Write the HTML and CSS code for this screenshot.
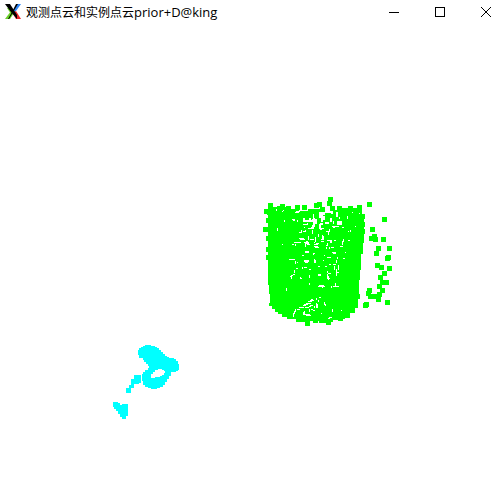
FILE: index.html
```html
<!DOCTYPE html>
<html lang="zh-CN">
<head>
<meta charset="utf-8">
<title>观测点云和实例点云prior+D@king</title>
<link rel="stylesheet" href="styles.css">
</head>
<body>
<header class="titlebar">
  <svg class="app-icon" viewBox="0 0 16 16" aria-hidden="true">
    <path fill="#2f86f5" d="M12 0h4l-5 7-2 1-1-2z"/>
    <path fill="#e8252b" d="M9 8l2-1 5 8h-5L8 10z"/>
    <path fill="#6cd02b" d="M0 15l6-8 3 2-4 6z"/>
    <path fill="#6cd02b" d="M2 4l3 0 3 5-2 1z"/>
    <path fill="#000" d="M0 0h5l7 11v4L6 8z"/>
    <path fill="#000" d="M11 0h2L4 15H3l4-7z"/>
  </svg>
  <h1 class="title">观测点云和实例点云<span class="latin">prior+D@king</span></h1>
  <div class="controls">
    <button type="button" class="control" aria-label="最小化"><svg viewBox="0 0 10 10"><path d="M0 5h10v1H0z"/></svg></button>
    <button type="button" class="control" aria-label="最大化"><svg viewBox="0 0 10 10"><path fill-rule="evenodd" d="M0 0h10v10H0zM1 1v8h8V1z"/></svg></button>
    <button type="button" class="control" aria-label="关闭"><svg viewBox="0 0 10 10"><path class="cross" d="M0 0l10 10M10 0L0 10"/></svg></button>
  </div>
</header>
<main class="viewer">
  <svg class="cloud" viewBox="0 26 501 460" role="img" aria-label="点云">
    <!-- mug body -->
    <path class="mug" d="M268 207H288V209H299V211H308V209H322V213H331V210H340V208H362V215H364V243H363V254H361V269H360V280H359V294H360V299H358V308H355V313H350V317H345V319H339V320H333V322H326V323H319V321H309V322H296V319H287V317H282V314H278V312H275V309H272V306H269V303H270V294H269V285H268Z"/>
    <!-- larger gaps near the rim -->
    <path class="opening" d="M305 211h5v5h-5zM310 207h4v6h-4zM313 213h5v5h-3v4h-3v-3h1zM319 212h6v3h-2v3h-4zM309 218h2v2h3v2h-5zM303 218h2v2h5v2h-7zM321 216h4v4h-2v2h-2zM315 219h2v5h-2v3h-2v-6h2zM325 222h4v2h-4zM320 223h3v2h-2v4h-2v-5h1zM312 225h2v4h-3v-2h1zM336 212h2v5h-2zM331 211h2v3h-2zM330 218h2v4h-2zM337 221h5v4h-5z"/>
    <g transform="translate(.5 .5)">
      <!-- gaps between the dense samples -->
      <path class="gap" d="M275 210h1M275 209h2M282 210h1M281 211h1M288 208h2M294 212h1M295 211h4M284 219v2M295 212h3M277 227v3M281 244h1M291 219h3M292 220h2M297 219v2M304 220h3M302 224h4M303 227h1M307 222v2M312 229v4M305 229v2M302 231h2M307 228h3M301 229v3M298 238h5M299 239h5M308 235v4M309 239h4M298 232h2M293 242h1M291 244h2M297 242h3M303 242h5M304 243h4M305 241h2M313 242h1M313 246h4M314 247h4M315 236v5M318 233v3M322 234v5M323 235v4M327 231h2M328 230v4M331 226h7M332 227h2M329 228v3M325 231h2M319 228h4M319 229h2M326 240h4M327 242v3M320 239h2M333 240h2M342 240v4M343 238v3M348 230v1M347 240h2"/>
      <path class="gap" d="M293 242h4M295 243v2M305 242v4M306 244h3M313 244h4M315 243h3M320 241h3M325 245h2M326 246v2M304 251h4M304 252h4M301 255h2M313 252v2M312 253h2M323 255h1M288 259h6M295 260v3M296 262h1M303 260h5M303 261h5M304 262h3M314 258v4M315 259v3M322 260h1M302 266v2M303 267h3M308 269h2M317 266h2M327 270v2M324 266h2M291 275v3M292 274h2M300 276v2M309 274v3M317 274h3M317 275h3M327 273v5M328 275v4M300 278h1M294 269v3M295 268h2M290 275h2M289 276h2M286 287v3M309 282v2M317 286h7M318 285h5M322 284v3M327 278h2M335 282v4M332 286h6M331 285v2M336 272v3"/>
      <path class="gap" d="M326 257h4M331 252h4M332 253h3M330 247h3M329 246v2M336 259v3M337 256v2M342 258h2M345 251v1M334 265v4M336 268v4M338 264v5M335 272h3M332 264h3M328 264h2M327 273h3M339 246h3M350 229v2M331 239v3M330 240v2M341 227h2M347 215v3M333 220v3M339 216v2M354 226h1M352 211v1M359 212v1"/>
      <path class="gap" d="M293 312v4M294 310v3M295 308v3M296 309h3M298 307h5M302 305h3M303 304h4M305 303h5M307 301h4M309 300h4M310 299h2M304 310v4M303 311v3M304 307h4M309 308v3M310 309h2M314 305v2M315 307h2M316 302v4M317 303v3M316 297v2M318 297h2M324 301v3M325 303v2M304 314h5M305 315h5M312 310h2M328 317h3M327 318h2M332 308v3M341 309v1M320 313h1M309 305h3M308 306h2M318 299v2"/>
      <!-- rim and outline samples -->
      <path class="point green" d="M270 205h0M266 211h0M265 229h0M268 220h0M269 212h0M282 206h0M279 208h0M288 208h0M297 207h0M304 207h0M311 211h0M316 205h0M319 204h0M330 199h0M329 203h0M322 209h0M307 213h0M316 215h0M332 208h0M339 208h0M350 208h0M359 207h0M362 216h0M362 224h0M362 231h0M268 238h0M268 249h0M268 257h0M358 267h0M357 296h0M307 323h0M315 320h0M298 319h0M328 322h0M340 318h0M347 315h0M352 310h0"/>
      <!-- handle samples -->
      <path class="point green" d="M369 204h0M384 219h0M372 229h0M374 236h0M371 238h0M375 239h0M383 239h0M378 248h0M389 248h0M376 253h0M388 257h0M387 258h0M377 265h0M381 267h0M389 268h0M384 273h0M380 277h0M382 282h0M386 282h0M379 286h0M369 290h0M382 290h0M368 293h0M370 296h0M375 296h0M379 294h0M378 299h0M366 304h0M365 305h0M387 302h0"/>
    </g>
    <!-- second observed object -->
    <path class="cyan" fill-rule="evenodd" d="M139 348H141V347H143V346H145V345H151V346H155V347H157V348H159V350H161V352H163V354H165V356H167V357H169V358H174V359H176V361H178V364H179V370H178V371H176V372H171V376H169V379H167V382H165V385H163V387H160V388H157V389H151V388H148V387H145V385H143V381H142V374H143V372H145V370H148V368H149V366H148V364H146V362H144V360H143V358H139V355H138V350H139ZM151 376V378H155V377H160V376H162V375H164V373H165V371H164V370H162V369H158V370H155V372H153V374H151Z"/>
    <path class="cyan" d="M134 375H141V383H139V384H134V388H131V393H126V388H129V385H131V379H134ZM113 402H118V403H120V405H122V404H128V416H126V419H122V417H120V414H118V411H116V409H114V407H113Z"/>
  </svg>
</main>
</body>
</html>
```
FILE: styles.css
```css
body {
  margin: 0;
  background: #fff;
  color: #000;
  font-family: "Open Sans", "Noto Sans CJK SC", sans-serif;
  overflow: hidden;
}

.titlebar {
  display: flex;
  align-items: flex-start;
  height: 26px;
  padding-left: 5px;
  overflow: hidden;
}

.app-icon {
  flex: none;
  width: 16px;
  height: 16px;
  margin: 4px 5px 0 0;
}

.title {
  flex: 1;
  margin: 0;
  font-size: 12px;
  font-weight: 400;
  line-height: 24px;
  white-space: nowrap;
}

.latin {
  font-size: 13px;
}

.controls {
  display: flex;
  flex: none;
  margin-right: -8px;
}

.control {
  display: flex;
  align-items: center;
  justify-content: center;
  width: 46px;
  height: 24px;
  padding: 0;
  border: 0;
  background: none;
}

.control svg {
  width: 10px;
  height: 10px;
  overflow: visible;
}

.cross {
  fill: none;
  stroke: #000;
}

.cloud {
  display: block;
  width: 100%;
  shape-rendering: crispEdges;
}

.mug {
  fill: #0f0;
}

.opening {
  fill: #fff;
}

.gap {
  fill: none;
  stroke: #fff;
}

.point {
  fill: none;
  stroke-width: 5;
  stroke-linecap: square;
}

.green {
  stroke: #0f0;
}

.cyan {
  fill: #0ff;
}
```
